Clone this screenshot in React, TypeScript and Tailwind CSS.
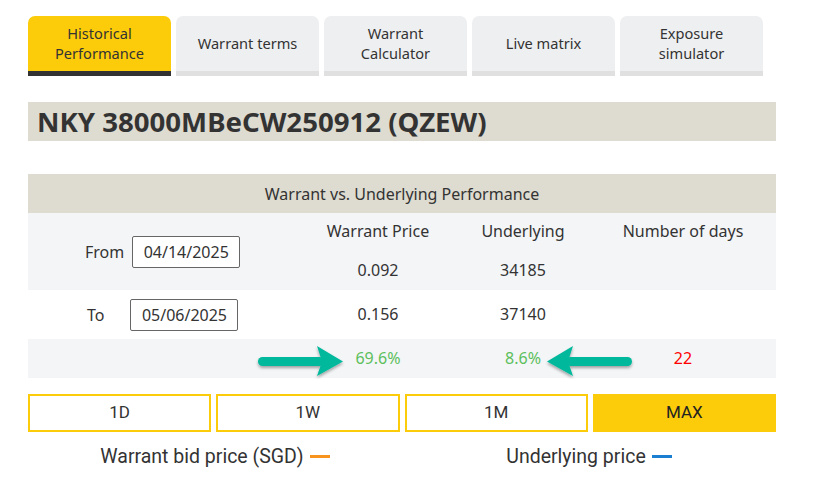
import React from "react";

const TABS = [
  { label: ["Historical", "Performance"], active: true },
  { label: ["Warrant terms"] },
  { label: ["Warrant", "Calculator"] },
  { label: ["Live matrix"] },
  { label: ["Exposure", "simulator"] },
];

const RANGES = ["1D", "1W", "1M", "MAX"];

function Arrow({ dir }: { dir: "right" | "left" }) {
  return (
    <svg width="92" height="34" viewBox="0 0 92 34" className={dir === "left" ? "-scale-x-100" : ""}>
      <defs>
        <filter id={`sh-${dir}`} x="-20%" y="-30%" width="140%" height="170%">
          <feDropShadow dx="0" dy="2" stdDeviation="1.5" floodColor="#000" floodOpacity="0.35" />
        </filter>
      </defs>
      <g filter={`url(#sh-${dir})`} fill="#00b89c">
        <rect x="3" y="12" width="66" height="9" rx="4.5" />
        <path d="M62 1 L88 16.5 L62 31 L67 16.5 Z" />
      </g>
    </svg>
  );
}

function DateBox({ value }: { value: string }) {
  return (
    <div className="flex h-[32px] w-[108px] items-center justify-center rounded-[2px] border border-[#666] bg-white text-[16px] text-[#333]">
      {value}
    </div>
  );
}

export default function App() {
  return (
    <div className="h-[479px] w-[816px] bg-white font-['Noto_Sans',sans-serif] text-[#333]">
      <div className="px-[28px] pt-[16px]">
        {/* Tabs */}
        <div className="flex gap-[5px]">
          {TABS.map((t, i) => (
            <div
              key={i}
              className={
                "flex h-[60px] w-[143px] items-center justify-center rounded-t-[7px] border-b-[5px] pb-[2px] text-center text-[14.6px] leading-[20px] " +
                (t.active ? "border-[#333] bg-[#fccc0a]" : "border-[#e0e0e0] bg-[#eeeff1]")
              }
            >
              <p>
                {t.label.map((l, j) => (
                  <React.Fragment key={l}>
                    {j > 0 && <br />}
                    {l}
                  </React.Fragment>
                ))}
              </p>
            </div>
          ))}
        </div>

        {/* Title */}
        <div className="mt-[26px] flex h-[39px] w-[748px] items-center bg-[#dedbd0] pl-[9px]">
          <h1 className="text-[27.6px] font-bold text-[#333]">NKY 38000MBeCW250912 (QZEW)</h1>
        </div>

        {/* Performance table */}
        <div className="mt-[33px] w-[748px] text-[16px]">
          <div className="flex h-[39px] items-center justify-center bg-[#dedbd0]">
            Warrant vs. Underlying Performance
          </div>

          <div className="grid h-[77px] grid-cols-[272px_156px_134px_186px] bg-[#f4f5f7]">
            <div className="flex items-center pl-[57px]">
              <span className="mr-[8px]">From</span>
              <DateBox value="04/14/2025" />
            </div>
            <div className="flex flex-col items-center pt-[6px]">
              <span>Warrant Price</span>
              <span className="mt-[15px]">0.092</span>
            </div>
            <div className="flex flex-col items-center pt-[6px]">
              <span>Underlying</span>
              <span className="mt-[15px]">34185</span>
            </div>
            <div className="flex flex-col items-center pt-[6px]">
              <span>Number of days</span>
            </div>
          </div>

          <div className="grid h-[49px] grid-cols-[272px_156px_134px_186px] bg-white">
            <div className="flex items-center pl-[59px]">
              <span className="mr-[26px]">To</span>
              <DateBox value="05/06/2025" />
            </div>
            <div className="flex items-center justify-center pb-[2px]">0.156</div>
            <div className="flex items-center justify-center pb-[2px]">37140</div>
            <div />
          </div>

          <div className="relative grid h-[39px] grid-cols-[272px_156px_134px_186px] bg-[#f4f5f7]">
            <div />
            <div className="flex items-center justify-center pb-[2px] text-[#5cc05c]">69.6%</div>
            <div className="flex items-center justify-center pb-[2px] text-[#5cc05c]">8.6%</div>
            <div className="flex items-center justify-center pb-[2px] text-[#ff0000]">22</div>
            <div className="absolute left-[227px] top-[6px]">
              <Arrow dir="right" />
            </div>
            <div className="absolute left-[515px] top-[6px]">
              <Arrow dir="left" />
            </div>
          </div>
        </div>

        {/* Range buttons */}
        <div className="mt-[16px] grid w-[748px] grid-cols-4 gap-[5px] font-['Roboto',sans-serif]">
          {RANGES.map((r) => (
            <div
              key={r}
              className={
                "flex h-[38px] items-center justify-center border-2 border-[#fccc0a] text-[17px] " +
                (r === "MAX" ? "bg-[#fccc0a] text-[#222]" : "bg-white text-[#333]")
              }
            >
              {r}
            </div>
          ))}
        </div>

        {/* Legend */}
        <div className="mt-[10px] flex w-[748px] font-['Roboto',sans-serif] text-[19.5px] text-[#333]">
          <div className="flex w-[374px] items-center justify-center gap-[6px]">
            <span>Warrant bid price (SGD)</span>
            <span className="h-[3px] w-[20px] bg-[#f7941d]" />
          </div>
          <div className="flex w-[374px] items-center justify-center gap-[6px]">
            <span>Underlying price</span>
            <span className="h-[3px] w-[20px] bg-[#1a7fd0]" />
          </div>
        </div>
      </div>
    </div>
  );
}
